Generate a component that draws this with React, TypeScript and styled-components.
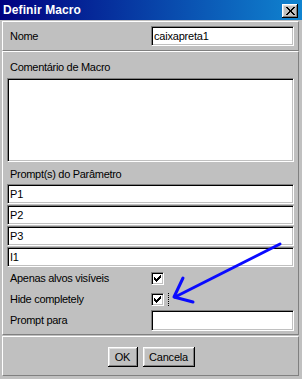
import React from "react";
import styled, { createGlobalStyle } from "styled-components";

const GlobalStyle = createGlobalStyle`
  html, body { margin: 0; padding: 0; background: #c0c0c0; }
  body { font-family: "Liberation Sans", Arial, sans-serif; font-size: 11px; color: #000; }
  * { box-sizing: border-box; }
`;

const Window = styled.div`
  position: relative;
  width: 302px;
  height: 379px;
  background: #c0c0c0;
  display: flex;
  flex-direction: column;
  overflow: hidden;
`;

const TitleBar = styled.div`
  height: 20px;
  flex: none;
  display: flex;
  align-items: center;
  justify-content: space-between;
  padding: 0 4px 0 3px;
  background: linear-gradient(to right, #000080, #1084d0);
`;

const TitleText = styled.span`
  color: #fff;
  font-weight: bold;
  font-size: 12px;
  letter-spacing: 0.1px;
`;

const CloseButton = styled.div`
  width: 16px;
  height: 14px;
  margin-top: 1px;
  background: #c0c0c0;
  box-shadow: inset -1px -1px #000, inset 1px 1px #fff, inset -2px -2px #808080, inset 2px 2px #dfdfdf;
  display: flex;
  align-items: center;
  justify-content: center;
`;

const Content = styled.div`
  padding: 1px 3px 0 2px;
  display: flex;
  flex-direction: column;
`;

const Panel = styled.div<{ $top?: number; $pt?: number; $pb?: number; $h?: number }>`
  margin-top: ${(p) => p.$top ?? 0}px;
  padding: ${(p) => p.$pt ?? 0}px 0 ${(p) => p.$pb ?? 0}px 0;
  ${(p) => (p.$h ? `height: ${p.$h}px;` : "")}
  border: 1px solid;
  border-color: #fff #808080 #808080 #fff;
  display: flex;
  flex-direction: column;
`;

const Row = styled.div<{ $h: number }>`
  height: ${(p) => p.$h}px;
  display: flex;
  align-items: center;
  padding-left: 7px;
`;

const Label = styled.span<{ $w?: number }>`
  ${(p) => (p.$w ? `width: ${p.$w}px; flex: none;` : "")}
  line-height: 13px;
  letter-spacing: -0.3px;
  white-space: nowrap;
`;

const SectionLabel = styled.div<{ $mb: number }>`
  padding-left: 7px;
  line-height: 13px;
  letter-spacing: -0.3px;
  margin-bottom: ${(p) => p.$mb}px;
`;

const sunken = `
  background: #fff;
  border: 1px solid;
  border-color: #808080 #fff #fff #808080;
  box-shadow: inset 1px 1px #000, inset -1px -1px #c0c0c0;
`;

const Field = styled.input<{ $w?: number; $h?: number }>`
  ${sunken}
  display: block;
  width: ${(p) => (p.$w ? `${p.$w}px` : "287px")};
  height: ${(p) => p.$h ?? 20}px;
  margin: 0;
  padding: 0 2px;
  font-family: "Liberation Sans", Arial, sans-serif;
  font-size: 11px;
  letter-spacing: -0.2px;
  color: #000;
  outline: none;
  flex: none;
`;

const FieldStack = styled.div`
  display: flex;
  flex-direction: column;
  gap: 1px;
  padding-left: 4px;
  margin-bottom: 1px;
`;

const TextArea = styled.div`
  ${sunken}
  width: 287px;
  height: 84px;
  margin-left: 4px;
  margin-bottom: 6px;
`;

const CheckBox = styled.div`
  ${sunken}
  width: 13px;
  height: 13px;
  flex: none;
  display: flex;
  align-items: center;
  justify-content: center;
`;

const FocusMark = styled.span`
  width: 1px;
  height: 13px;
  margin-left: 4px;
  border-left: 1px dotted #000;
`;

const ButtonBar = styled.div`
  display: flex;
  justify-content: center;
  gap: 5px;
  padding-top: 10px;
  padding-left: 1px;
`;

const Button = styled.div<{ $w: number }>`
  width: ${(p) => p.$w}px;
  height: 20px;
  background: #c0c0c0;
  box-shadow: inset -1px -1px #000, inset 1px 1px #fff, inset -2px -2px #808080, inset 2px 2px #dfdfdf;
  display: flex;
  align-items: center;
  justify-content: center;
  font-size: 11px;
  letter-spacing: -0.2px;
`;

const Overlay = styled.svg`
  position: absolute;
  left: 0;
  top: 0;
  pointer-events: none;
`;

const Check = () => (
  <svg width="9" height="9" viewBox="0 0 9 9" shapeRendering="crispEdges">
    <path d="M1 3h1v3h-1z M2 4h1v3h-1z M3 5h1v3h-1z M4 4h1v3h-1z M5 3h1v3h-1z M6 2h1v3h-1z M7 1h1v3h-1z" fill="#000" />
  </svg>
);

const CloseGlyph = () => (
  <svg width="9" height="8" viewBox="0 0 9 8" shapeRendering="crispEdges">
    <path d="M0 0h2v1h-2z M7 0h2v1h-2z M1 1h2v1h-2z M6 1h2v1h-2z M2 2h2v1h-2z M5 2h2v1h-2z M3 3h3v1h-3z M3 4h3v1h-3z M2 5h2v1h-2z M5 5h2v1h-2z M1 6h2v1h-2z M6 6h2v1h-2z M0 7h2v1h-2z M7 7h2v1h-2z" fill="#000" />
  </svg>
);

export default function App() {
  return (
    <>
      <GlobalStyle />
      <Window>
        <TitleBar>
          <TitleText>Definir Macro</TitleText>
          <CloseButton>
            <CloseGlyph />
          </CloseButton>
        </TitleBar>
        <Content>
          <Panel $h={30}>
            <Row $h={28}>
              <Label $w={141}>Nome</Label>
              <Field readOnly defaultValue="caixapreta1" $w={143} />
            </Row>
          </Panel>
          <Panel $pt={9} $pb={3}>
            <SectionLabel $mb={4}>Comentário de Macro</SectionLabel>
            <TextArea />
            <SectionLabel $mb={3}>Prompt(s) do Parâmetro</SectionLabel>
            <FieldStack>
              <Field readOnly defaultValue="P1" />
              <Field readOnly defaultValue="P2" />
              <Field readOnly defaultValue="P3" />
              <Field readOnly defaultValue="I1" />
            </FieldStack>
            <Row $h={21}>
              <Label $w={141}>Apenas alvos visíveis</Label>
              <CheckBox>
                <Check />
              </CheckBox>
            </Row>
            <Row $h={21}>
              <Label $w={141}>Hide completely</Label>
              <CheckBox>
                <Check />
              </CheckBox>
              <FocusMark />
            </Row>
            <Row $h={21}>
              <Label $w={141}>Prompt para</Label>
              <Field readOnly defaultValue="" $w={143} $h={21} />
            </Row>
          </Panel>
          <Panel $top={1} $h={40}>
            <ButtonBar>
              <Button $w={30}>OK</Button>
              <Button $w={52}>Cancela</Button>
            </ButtonBar>
          </Panel>
        </Content>
        <Overlay width="302" height="379" viewBox="0 0 302 379">
          <g stroke="#0a0aff" strokeWidth="3" fill="none" strokeLinecap="round" strokeLinejoin="round">
            <line x1="280" y1="244" x2="175" y2="297" />
            <polyline points="183,278 174,297 193,302" />
          </g>
        </Overlay>
      </Window>
    </>
  );
}
